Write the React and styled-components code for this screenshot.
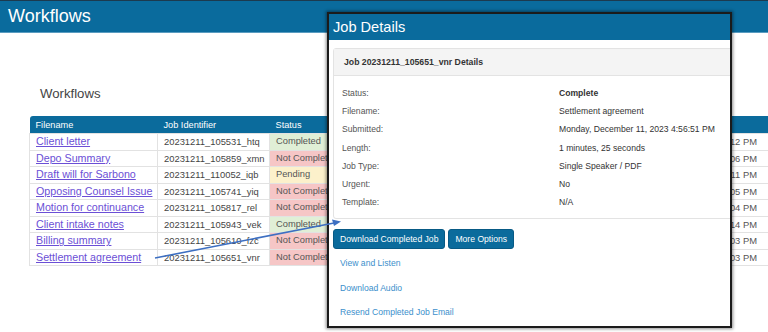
import styled, { createGlobalStyle } from "styled-components"

const GlobalStyle = createGlobalStyle`
  html, body {
    margin: 0;
    padding: 0;
    background: #fff;
    overflow: hidden;
  }
  body {
    font-family: "Liberation Sans", Arial, sans-serif;
    color: #333;
  }
`

const jobs = [
  { name: "Client letter", id: "20231211_105531_htq", status: "Completed", time: "12/11/2023 4:55:12 PM" },
  { name: "Depo Summary", id: "20231211_105859_xmn", status: "Not Completed", time: "12/11/2023 4:59:06 PM" },
  { name: "Draft will for Sarbono", id: "20231211_110052_iqb", status: "Pending", time: "12/11/2023 5:01:11 PM" },
  { name: "Opposing Counsel Issue", id: "20231211_105741_yiq", status: "Not Completed", time: "12/11/2023 4:58:05 PM" },
  { name: "Motion for continuance", id: "20231211_105817_rel", status: "Not Completed", time: "12/11/2023 4:58:04 PM" },
  { name: "Client intake notes", id: "20231211_105943_vek", status: "Completed", time: "12/11/2023 5:00:14 PM" },
  { name: "Billing summary", id: "20231211_105610_fzc", status: "Not Completed", time: "12/11/2023 4:56:03 PM" },
  { name: "Settlement agreement", id: "20231211_105651_vnr", status: "Not Completed", time: "12/11/2023 4:57:03 PM" },
]

const details = [
  ["Status:", "Complete", true],
  ["Filename:", "Settlement agreement"],
  ["Submitted:", "Monday, December 11, 2023 4:56:51 PM"],
  ["Length:", "1 minutes, 25 seconds"],
  ["Job Type:", "Single Speaker / PDF"],
  ["Urgent:", "No"],
  ["Template:", "N/A"],
]

const statusColors = {
  Completed: "#e0efd6",
  "Not Completed": "#f6c6c6",
  Pending: "#fcf1cb",
}

const App = () => {
  return (
    <Page>
      <GlobalStyle />
      <TopBar>Workflows</TopBar>
      <Content>
        <Heading>Workflows</Heading>
        <Table>
          <colgroup>
            <col style={{ width: 128 }} />
            <col style={{ width: 112 }} />
            <col style={{ width: 96 }} />
            <col style={{ width: 150 }} />
            <col style={{ width: 259 }} />
          </colgroup>
          <thead>
            <tr>
              <Th>Filename</Th>
              <Th>Job Identifier</Th>
              <Th>Status</Th>
              <Th>Job Type</Th>
              <Th>Submitted</Th>
            </tr>
          </thead>
          <tbody>
            {jobs.map((job) => (
              <tr key={job.id}>
                <Td><FileLink href="#">{job.name}</FileLink></Td>
                <Td>{job.id}</Td>
                <StatusCell $bg={statusColors[job.status]}>{job.status}</StatusCell>
                <Td>Single Speaker / PDF</Td>
                <TimeCell>{job.time}</TimeCell>
              </tr>
            ))}
          </tbody>
        </Table>
      </Content>

      <Modal>
        <ModalHeader>Job Details</ModalHeader>
        <ModalBody>
          <Panel>
            <PanelHeading>Job 20231211_105651_vnr Details</PanelHeading>
            <PanelBody>
              {details.map(([label, value, bold]) => (
                <DetailRow key={label}>
                  <Label>{label}</Label>
                  <Value $bold={bold}>{value}</Value>
                </DetailRow>
              ))}
            </PanelBody>
          </Panel>
          <Actions>
            <Button>Download Completed Job</Button>
            <Button>More Options</Button>
          </Actions>
          <Links>
            <ActionLink href="#">View and Listen</ActionLink>
            <ActionLink href="#">Download Audio</ActionLink>
            <ActionLink href="#">Resend Completed Job Email</ActionLink>
          </Links>
        </ModalBody>
      </Modal>

      <Arrow width="768" height="332" viewBox="0 0 768 332">
        <line x1="155" y1="258" x2="334" y2="223" stroke="#3d6fc2" strokeWidth="1.6" />
        <polygon points="341,221.5 332,219.5 334,226" fill="#3d6fc2" />
      </Arrow>
    </Page>
  )
}

export default App

const Page = styled.div`
  position: relative;
  width: 768px;
  height: 332px;
  overflow: hidden;
`

const TopBar = styled.header`
  height: 33px;
  box-sizing: border-box;
  border-top: 1px solid #1c3a4f;
  border-bottom: 1px solid #5a9cc0;
  background: #0a6b9d;
  color: #fff;
  font-size: 18px;
  line-height: 30px;
  padding-left: 8px;
`

const Content = styled.main`
  padding: 52px 0 0 29px;
`

const Heading = styled.h2`
  margin: 0 0 13px 11px;
  font-size: 13.2px;
  line-height: 18px;
  font-weight: normal;
  color: #444;
`

const Table = styled.table`
  width: 745px;
  table-layout: fixed;
  border-collapse: collapse;
`

const Th = styled.th`
  background: #0b6b9c;
  color: #fff;
  font-size: 9.2px;
  font-weight: normal;
  text-align: left;
  height: 17px;
  padding: 0 6px;
  white-space: nowrap;
  overflow: hidden;

  &:first-child {
    border-top-left-radius: 3px;
  }
`

const Td = styled.td`
  height: 15.5px;
  padding: 0 3px 0 6px;
  border: 1px solid #e2e2e2;
  color: #444;
  font-size: 9.4px;
  white-space: nowrap;
  overflow: hidden;
  text-align: left;
  line-height: 15px;
`

const StatusCell = styled(Td)`
  background: ${(p) => p.$bg};
  font-size: 9.3px;
  color: #555;
`

const TimeCell = styled(Td)`
  text-align: right;
  padding-right: 17px;
  color: #555;
`

const FileLink = styled.a`
  color: #6b4fd6;
  font-size: 10.7px;
  text-decoration: underline;
`

const Modal = styled.section`
  position: absolute;
  left: 327px;
  top: 12px;
  width: 405px;
  height: 316px;
  box-sizing: border-box;
  border: 2px solid #1b1b1b;
  background: #fff;
  box-shadow: 0 0 3px 1px rgba(0, 0, 0, 0.45);
  overflow: hidden;
  display: flex;
  flex-direction: column;
`

const ModalHeader = styled.div`
  height: 26px;
  background: #0a6b9d;
  color: #fff;
  font-size: 14.6px;
  line-height: 26px;
  padding-left: 4px;
`

const ModalBody = styled.div`
  padding: 8px 0 0 4px;
`

const Panel = styled.div`
  border: 1px solid #e3e3e3;
  border-radius: 3px;
  margin-right: -8px;
`

const PanelHeading = styled.div`
  background: #f4f4f4;
  border-bottom: 1px solid #e3e3e3;
  height: 26px;
  line-height: 26px;
  padding-left: 10px;
  font-size: 8.7px;
  font-weight: bold;
  color: #333;
`

const PanelBody = styled.div`
  padding: 8px 0 7px 8px;
`

const DetailRow = styled.div`
  display: grid;
  grid-template-columns: 217px 1fr;
  height: 18.2px;
  align-items: center;
  font-size: 8.6px;
`

const Label = styled.span`
  color: #555;
`

const Value = styled.span`
  color: #333;
  font-weight: ${(p) => (p.$bold ? "bold" : "normal")};
`

const Actions = styled.div`
  display: flex;
  gap: 3px;
  margin-top: 10px;
`

const Button = styled.button`
  font-family: inherit;
  font-size: 8.6px;
  color: #fff;
  background: #0b6b9c;
  border: 1px solid #085a85;
  border-radius: 3px;
  height: 20px;
  padding: 0 6px;
  cursor: pointer;
`

const Links = styled.div`
  display: flex;
  flex-direction: column;
  align-items: flex-start;
  gap: 13.5px;
  padding: 9px 0 0 7px;
`

const ActionLink = styled.a`
  color: #3b8fcc;
  font-size: 8.6px;
  line-height: 11px;
  text-decoration: none;
`

const Arrow = styled.svg`
  position: absolute;
  left: 0;
  top: 0;
  pointer-events: none;
`
